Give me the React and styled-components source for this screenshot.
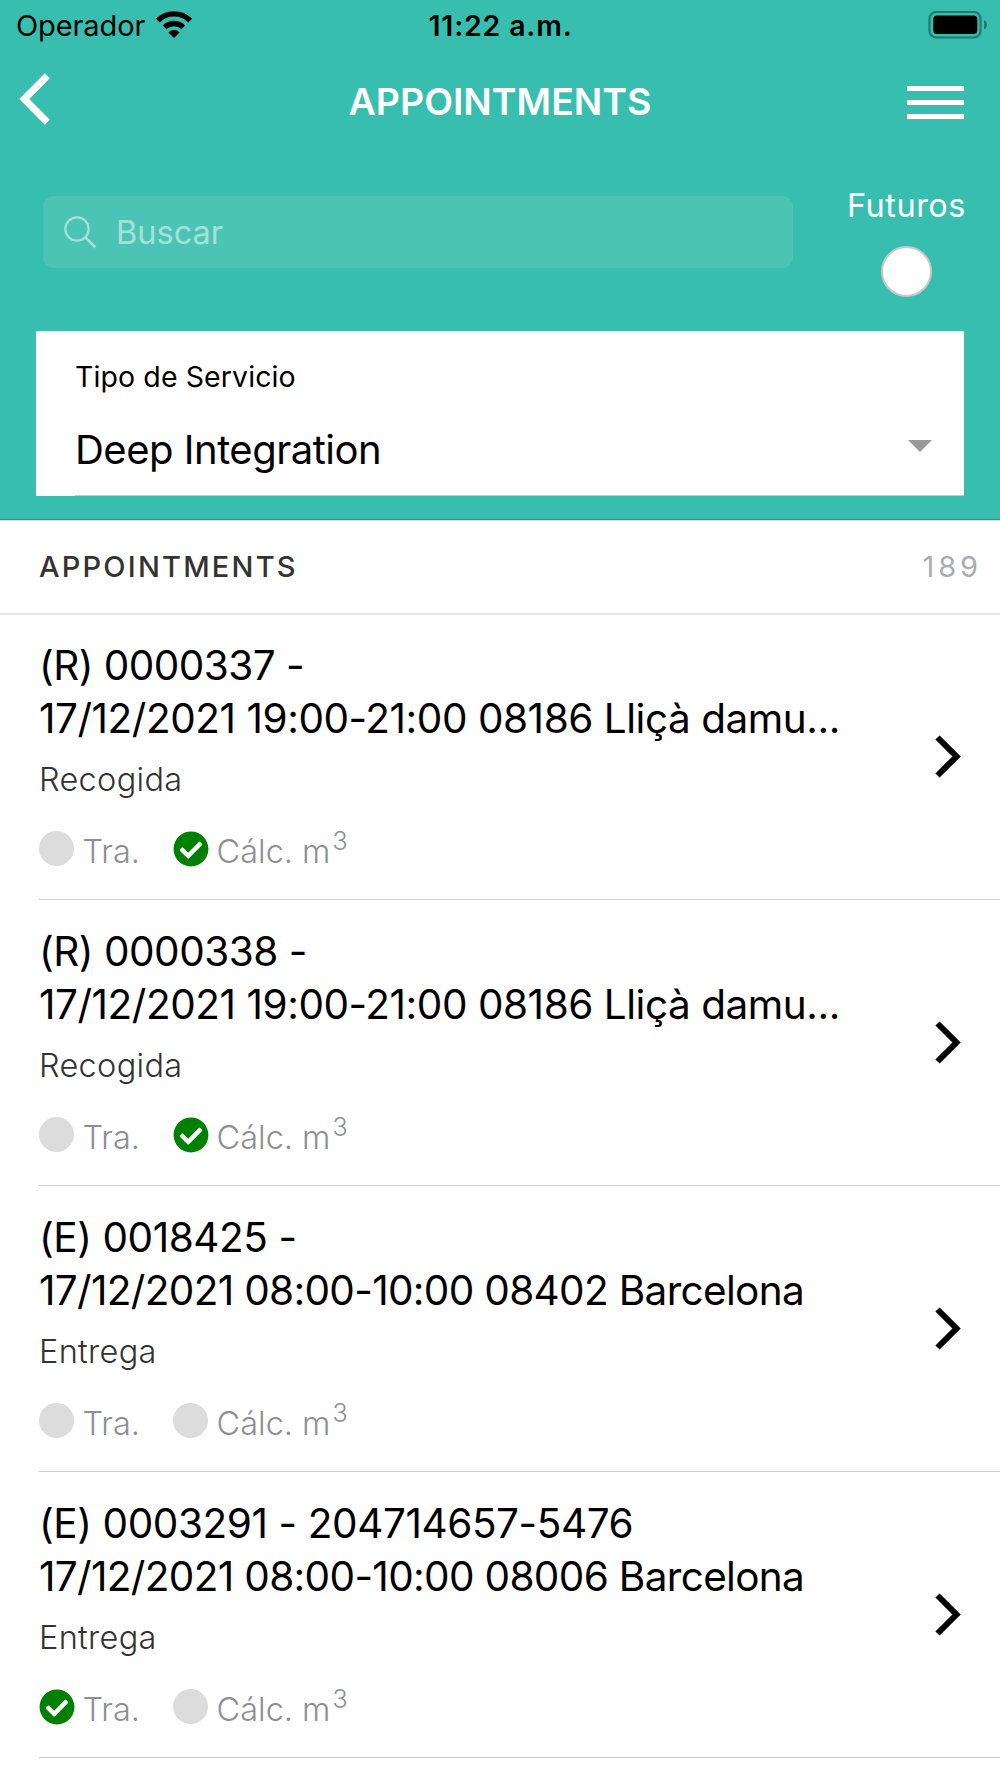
import React from "react";
import { FaCheckCircle } from "react-icons/fa";
import styled, { createGlobalStyle } from "styled-components";

const GlobalStyle = createGlobalStyle`
  * {
    box-sizing: border-box;
  }
  body {
    margin: 0;
    background-color: white;
  }
`;

const Container = styled.div`
  width: 1000px;
  height: 1778px;
  overflow: hidden;
  background-color: white;
  font-family: Inter, "Liberation Sans", sans-serif;
  color: black;
  white-space: nowrap;
`;

const Header = styled.header`
  height: 520px;
  background-color: #38beae;
  border-bottom: 1px solid #249a8a;
`;

const StatusBar = styled.div`
  height: 50px;
  padding: 0 13px 0 16px;
  display: grid;
  grid-template-columns: 1fr auto 1fr;
  align-items: center;
`;

const Carrier = styled.div`
  display: flex;
  align-items: center;
  font-size: 29px;
  letter-spacing: -0.1px;
`;

const WifiIcon = styled.svg`
  width: 36px;
  height: 27px;
  margin: -2px 0 0 11px;
`;

const Time = styled.div`
  font-size: 28.5px;
  font-weight: 600;
  letter-spacing: 0.8px;
  margin-right: 2px;
`;

const BatteryIcon = styled.svg`
  width: 60px;
  height: 28px;
  justify-self: end;
  margin-top: -1px;
`;

const NavBar = styled.nav`
  height: 103px;
  padding: 0 19px;
  display: grid;
  grid-template-columns: 1fr auto 1fr;
  align-items: center;
`;

const BackIcon = styled.svg`
  width: 32px;
  height: 52px;
  margin-top: -6px;
`;

const Title = styled.h1`
  margin: 0;
  font-size: 37.5px;
  font-weight: 600;
  color: white;
`;

const Menu = styled.div`
  justify-self: end;
  display: flex;
  flex-direction: column;
  gap: 9px;
  margin: 1px 17px 0 0;
`;

const MenuLine = styled.span`
  width: 57px;
  height: 5px;
  background-color: white;
`;

const Filters = styled.div`
  height: 178px;
  padding: 31px 35px 0 43px;
  display: flex;
  align-items: flex-start;
  justify-content: space-between;
`;

const Search = styled.div`
  width: 750px;
  height: 72px;
  margin-top: 12px;
  padding-left: 21px;
  display: flex;
  align-items: center;
  border-radius: 11px;
  background-color: #4bc4b5;
  color: #a5e1da;
  font-size: 32.5px;
`;

const SearchIcon = styled.svg`
  width: 33px;
  height: 33px;
  margin-right: 19px;
`;

const Future = styled.div`
  width: 117px;
  display: flex;
  flex-direction: column;
  align-items: center;
  color: white;
  font-size: 32.5px;
  line-height: 44px;
  letter-spacing: 0.5px;
`;

const Knob = styled.span`
  width: 51px;
  height: 51px;
  margin-top: 18px;
  border: 2.5px solid #c7c7cc;
  border-radius: 50%;
  background-color: white;
`;

const Select = styled.div`
  width: 928px;
  height: 165px;
  margin: 0 auto;
  padding-left: 39px;
  background-color: white;
`;

const SelectBody = styled.div`
  height: 165px;
  padding: 26px 32px 0 0;
  border-bottom: 1px solid #c8c7cc;
`;

const SelectLabel = styled.div`
  font-size: 28.5px;
  line-height: 40px;
  letter-spacing: 0.1px;
`;

const SelectValue = styled.div`
  display: flex;
  align-items: center;
  justify-content: space-between;
  margin-top: 28px;
  font-size: 40px;
  line-height: 50px;
  letter-spacing: -0.5px;
`;

const Caret = styled.span`
  border-left: 12px solid transparent;
  border-right: 12px solid transparent;
  border-top: 12px solid #999;
  margin-top: -8px;
`;

const ListHeader = styled.div`
  height: 95px;
  padding: 0 18px 2px 39px;
  display: flex;
  align-items: center;
  justify-content: space-between;
  border-top: 1px solid #cfe2df;
  border-bottom: 2px solid #e5e5e5;
  font-size: 29px;
  font-weight: 500;
  color: #333;
  letter-spacing: 2.2px;
`;

const Count = styled.span`
  font-weight: 400;
  color: #aaaab4;
  letter-spacing: 3.9px;
`;

const List = styled.ul`
  margin: -1px 0 0;
  padding: 0 0 0 39px;
  list-style: none;
`;

const ListItem = styled.li`
  height: 286px;
  padding-right: 39px;
  display: flex;
  align-items: center;
  justify-content: space-between;
  border-bottom: 1px solid #d0d0d2;
`;

const Info = styled.div`
  height: 100%;
  padding-top: 25px;
`;

const Line = styled.div`
  font-size: 40.5px;
  line-height: 53px;
  letter-spacing: ${(props) => props.$spacing}px;
`;

const Kind = styled.div`
  margin-top: 12px;
  font-size: 32.5px;
  font-weight: 300;
  line-height: 45px;
  letter-spacing: 0.3px;
  color: #333;
`;

const Checks = styled.div`
  display: flex;
  margin-top: 28px;
  gap: 33px;
`;

const Check = styled.div`
  display: flex;
  font-size: 32.5px;
  font-weight: 300;
  line-height: 43px;
  color: #8e8e93;
`;

const EmptyIcon = styled.span`
  width: 35px;
  height: 35px;
  margin: 1px 8.5px 0 0;
  border-radius: 50%;
  background-color: #dcdcdc;
`;

const DoneIcon = styled(FaCheckCircle)`
  width: 36px;
  height: 36px;
  margin: 0.5px 8px 0 -0.5px;
  color: green;
`;

const Sup = styled.span`
  margin: -10px 0 0 2px;
  font-size: 25px;
`;

const ChevronIcon = styled.svg`
  width: 26px;
  height: 43px;
`;

const appointments = [
  {
    id: 1,
    title: "(R) 0000337 -",
    detail: "17/12/2021 19:00-21:00 08186 Lliçà damu...",
    spacing: [-0.55, -0.46],
    kind: "Recogida",
    tra: false,
    calc: true,
  },
  {
    id: 2,
    title: "(R) 0000338 -",
    detail: "17/12/2021 19:00-21:00 08186 Lliçà damu...",
    spacing: [-0.5, -0.46],
    kind: "Recogida",
    tra: false,
    calc: true,
  },
  {
    id: 3,
    title: "(E) 0018425 -",
    detail: "17/12/2021 08:00-10:00 08402 Barcelona",
    spacing: [-0.45, -0.67],
    kind: "Entrega",
    tra: false,
    calc: false,
  },
  {
    id: 4,
    title: "(E) 0003291 - 204714657-5476",
    detail: "17/12/2021 08:00-10:00 08006 Barcelona",
    spacing: [-0.42, -0.66],
    kind: "Entrega",
    tra: true,
    calc: false,
  },
];

const App = () => {
  return (
    <Container>
      <GlobalStyle />
      <Header>
        <StatusBar>
          <Carrier>
            Operador
            <WifiIcon viewBox="0 0 36 27">
              <path d="M18 27l-5.6-5.6a8 8 0 0 1 11.2 0z" />
              <path
                d="M8.6 16.4a13.4 13.4 0 0 1 18.8 0M1.8 9.5a23 23 0 0 1 32.4 0"
                fill="none"
                stroke="black"
                strokeWidth="5.4"
              />
            </WifiIcon>
          </Carrier>
          <Time>11:22 a.m.</Time>
          <BatteryIcon viewBox="0 0 60 28">
            <rect
              x="2.5"
              y="1"
              width="51"
              height="25.5"
              rx="6.5"
              fill="none"
              stroke="#237a70"
              strokeWidth="2.2"
            />
            <rect x="6.3" y="4.5" width="44" height="18.5" rx="3.5" />
            <path d="M57 9q3 1.5 3 4.8t-3 4.8z" fill="#237a70" />
          </BatteryIcon>
        </StatusBar>
        <NavBar>
          <BackIcon viewBox="0 0 32 52">
            <path
              d="M28.3 2.8L5.3 26l23 23.2"
              fill="none"
              stroke="white"
              strokeWidth="7.2"
            />
          </BackIcon>
          <Title>APPOINTMENTS</Title>
          <Menu>
            <MenuLine />
            <MenuLine />
            <MenuLine />
          </Menu>
        </NavBar>
        <Filters>
          <Search>
            <SearchIcon viewBox="0 0 33 33" fill="none" stroke="#a5e1da">
              <circle cx="13" cy="13" r="11.6" strokeWidth="2.2" />
              <path d="M21.2 21.2l10.3 10.3" strokeWidth="2.6" />
            </SearchIcon>
            Buscar
          </Search>
          <Future>
            Futuros
            <Knob />
          </Future>
        </Filters>
        <Select>
          <SelectBody>
            <SelectLabel>Tipo de Servicio</SelectLabel>
            <SelectValue>
              Deep Integration
              <Caret />
            </SelectValue>
          </SelectBody>
        </Select>
      </Header>
      <ListHeader>
        APPOINTMENTS
        <Count>189</Count>
      </ListHeader>
      <List>
        {appointments.map((item) => (
          <ListItem key={item.id}>
            <Info>
              <Line $spacing={item.spacing[0]}>{item.title}</Line>
              <Line $spacing={item.spacing[1]}>{item.detail}</Line>
              <Kind>{item.kind}</Kind>
              <Checks>
                <Check>
                  {item.tra ? <DoneIcon /> : <EmptyIcon />}
                  Tra.
                </Check>
                <Check>
                  {item.calc ? <DoneIcon /> : <EmptyIcon />}
                  Cálc. m<Sup>3</Sup>
                </Check>
              </Checks>
            </Info>
            <ChevronIcon viewBox="0 0 26 43">
              <path
                d="M2.5 2.5l19 19-19 19"
                fill="none"
                stroke="black"
                strokeWidth="6"
              />
            </ChevronIcon>
          </ListItem>
        ))}
      </List>
    </Container>
  );
};

export default App;
